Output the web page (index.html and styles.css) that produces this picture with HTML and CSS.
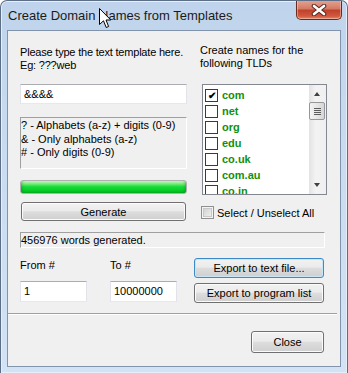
FILE: index.html
```html
<!DOCTYPE html>
<html lang="en">
<head>
    <meta charset="UTF-8">
    <title>Create Domain Names from Templates</title>
    <link rel="stylesheet" href="styles.css">
</head>
<body>
    <div class="window">
        <div class="titlebar">
            <div class="title">Create Domain Names from Templates</div>
            <div class="close-x">
                <svg width="16" height="12" viewBox="0 0 16 12">
                    <path d="M3 2 L13 10 M13 2 L3 10" stroke="#5a2b22" stroke-width="4.6" stroke-linecap="round"/>
                    <path d="M3 2 L13 10 M13 2 L3 10" stroke="#ffffff" stroke-width="2.6" stroke-linecap="round"/>
                </svg>
            </div>
        </div>

        <div class="client">
            <div class="upper">
                <div class="col">
                    <p class="label">Please type the text template here.<br>Eg: ???web</p>
                    <div class="textbox template">&amp;&amp;&amp;&amp;</div>
                    <div class="infobox">
                        ? - Alphabets (a-z) + digits (0-9)<br>
                        &amp; - Only alphabets (a-z)<br>
                        # - Only digits (0-9)
                    </div>
                    <div class="progress"></div>
                    <button class="btn generate">Generate</button>
                </div>
                <div class="col">
                    <p class="label tld-label">Create names for the<br>following TLDs</p>
                    <div class="listbox">
                        <div class="items">
                            <div class="item"><span class="cb checked">&#10004;</span>com</div>
                            <div class="item"><span class="cb"></span>net</div>
                            <div class="item"><span class="cb"></span>org</div>
                            <div class="item"><span class="cb"></span>edu</div>
                            <div class="item"><span class="cb"></span>co.uk</div>
                            <div class="item"><span class="cb"></span>com.au</div>
                            <div class="item"><span class="cb"></span>co.in</div>
                        </div>
                        <div class="scrollbar">
                            <div class="arrow up"></div>
                            <div class="thumb"><span></span><span></span><span></span><span></span></div>
                            <div class="track"></div>
                            <div class="arrow down"></div>
                        </div>
                    </div>
                    <div class="select-all"><span class="cb7"></span>Select / Unselect All</div>
                </div>
            </div>

            <div class="status">456976 words generated.</div>

            <div class="lower">
                <div class="field">
                    <div class="flabel">From #</div>
                    <div class="textbox num">1</div>
                </div>
                <div class="field">
                    <div class="flabel">To #</div>
                    <div class="textbox num">10000000</div>
                </div>
                <div class="exports">
                    <button class="btn focused">Export to text file...</button>
                    <button class="btn">Export to program list</button>
                </div>
            </div>

            <div class="separator"></div>

            <div class="footer">
                <button class="btn close">Close</button>
            </div>
        </div>

        <svg class="cursor" width="13" height="21" viewBox="0 0 13 21">
            <path d="M0.5 0.5 L0.5 16.5 L4.5 12.8 L7.2 19.5 L9.6 18.5 L7 12 L11.8 12 Z" fill="#fff" stroke="#000" stroke-width="1"/>
        </svg>
    </div>
</body>
</html>
```

FILE: styles.css
```css
body { margin: 0; background: #fff; font-family: "Liberation Sans", Arial, sans-serif; font-size: 11px; color: #000; }

.window {
    position: relative; width: 348px; height: 373px; box-sizing: border-box;
    border: 1px solid #5d6f86; border-bottom: none; border-radius: 7px 7px 0 0;
    background: linear-gradient(#bfd4ec, #c9dbf0 40%, #d3e3f5);
    box-shadow: inset 0 0 0 1px #e6eef8;
    overflow: hidden;
}

.titlebar { display: flex; height: 29px; }
.title { flex: 1; padding: 7px 0 0 7px; font-size: 13px; line-height: 15px; color: #1b1b1b; }
.close-x {
    width: 44px; height: 19px; margin: -1px 5px 0 0;
    display: flex; align-items: center; justify-content: center;
    border: 1px solid #6b2a1f; border-top: none; border-radius: 0 0 5px 5px;
    background: linear-gradient(#e6a594 0%, #d47b66 45%, #c2412a 55%, #cf5a3e 85%, #e08a6a 100%);
    box-shadow: inset 0 0 0 1px rgba(255,220,210,0.45);
}

.client {
    margin-left: 6px; width: 334px; height: 337px; box-sizing: border-box;
    border: 1px solid #8294ab; background: #f0f0f0;
    padding: 15px 13px 0 12px;
}

.upper { display: grid; grid-template-columns: 167px 127px; column-gap: 13px; }
.col { display: flex; flex-direction: column; }
.label { margin: 0; line-height: 13px; white-space: nowrap; letter-spacing: -0.2px; }
.tld-label { margin-top: -2px; letter-spacing: 0; }

.textbox {
    box-sizing: border-box; background: #fff;
    border: 1px solid #e2e3ea; border-top-color: #abadb3; border-bottom-color: #e3e9ef;
    padding-left: 3px;
}
.template { height: 20px; line-height: 18px; margin-top: 12px; }

.infobox {
    height: 52px; box-sizing: border-box; margin-top: 13px;
    border: 1px solid #fff; border-top-color: #a0a0a0; border-left-color: #a0a0a0;
    padding-top: 1px; line-height: 13.5px;
}

.progress {
    height: 14px; margin-top: 11px; box-sizing: border-box;
    border: 1px solid #b0b0b0; border-radius: 3px;
    background: linear-gradient(#c8f7c8 0%, #72eb72 25%, #18da38 48%, #06d027 75%, #07ad20 100%);
    box-shadow: inset 3px 0 3px -2px rgba(0,90,0,0.35), inset -3px 0 3px -2px rgba(0,90,0,0.35);
}

.btn {
    font: inherit; color: #000; height: 20px; padding: 0;
    border: 1px solid #707070; border-radius: 3px;
    background: linear-gradient(#f2f2f2 0%, #ebebeb 45%, #dddddd 52%, #cfcfcf 100%);
    box-shadow: inset 0 0 0 1px #fbfbfb;
}
.btn.focused { border-color: #3c8bc6; box-shadow: inset 0 0 0 1px #c7e6f8; }
.generate { margin: 8px 1px 0 1px; height: 19px; }

.listbox {
    display: flex; margin: 14px 0 0 2px; width: 125px; height: 111px; box-sizing: border-box;
    border: 1px solid #828790; background: #fff; overflow: hidden;
}
.items { flex: 1; padding: 2px 0 0 2px; overflow: hidden; }
.item { display: flex; align-items: center; height: 16px; font-weight: bold; color: #12900e; }
.cb {
    width: 11px; height: 11px; margin-right: 4px; border: 1px solid #3a3a3a; background: #fff;
    font-size: 10px; line-height: 11px; text-align: center; color: #000;
}

.scrollbar {
    width: 17px; display: flex; flex-direction: column;
    background: linear-gradient(to right, #e3e3e3, #f3f3f3 40%, #f0f0f0);
}
.arrow { height: 17px; position: relative; }
.arrow::after {
    content: ""; position: absolute; left: 5px; width: 0; height: 0;
    border-left: 3.5px solid transparent; border-right: 3.5px solid transparent;
}
.arrow.up::after { top: 7px; border-bottom: 4px solid #404040; }
.arrow.down::after { top: 6px; border-top: 4px solid #404040; }
.thumb {
    height: 18px; margin: 0 1px 0 0; box-sizing: border-box;
    border: 1px solid #979797; border-radius: 2px;
    background: linear-gradient(to right, #f3f3f3, #e6e6e6 50%, #d6d6d6);
    display: flex; flex-direction: column; align-items: center; justify-content: center; gap: 1px;
}
.thumb span { width: 7px; height: 1px; background: #5c5c5c; }
.track { flex: 1; }

.select-all { display: flex; align-items: center; margin-top: 11px; height: 13px; }
.cb7 {
    width: 13px; height: 13px; box-sizing: border-box; margin: 0 3px 0 1px;
    border: 1px solid #8f8f8f; background: linear-gradient(135deg, #cbcbcb, #f6f6f6);
    box-shadow: inset 0 0 0 1px #f4f4f4, inset 0 0 0 2px #c8c8c8;
}

.status {
    width: 305px; height: 16px; margin-top: 11px; box-sizing: border-box;
    border: 1px solid #fff; border-top-color: #a0a0a0; border-left-color: #a0a0a0;
    line-height: 14px;
}

.lower { display: flex; }
.field { display: flex; flex-direction: column; width: 67px; margin-right: 23px; }
.field + .field { margin-right: 17px; }
.flabel { margin-top: 11px; line-height: 13px; }
.num { height: 21px; line-height: 19px; margin-top: 9px; }
.exports { display: flex; flex-direction: column; gap: 5px; margin-top: 10px; width: 130px; }

.separator { margin: 10px -10px 0 -12px; height: 1px; background: #a0a0a0; border-bottom: 1px solid #fff; }

.footer { display: flex; justify-content: flex-end; padding-right: 3px; }
.close { width: 73px; height: 22px; margin-top: 16px; }

.cursor { position: absolute; left: 98px; top: 7px; }
```
